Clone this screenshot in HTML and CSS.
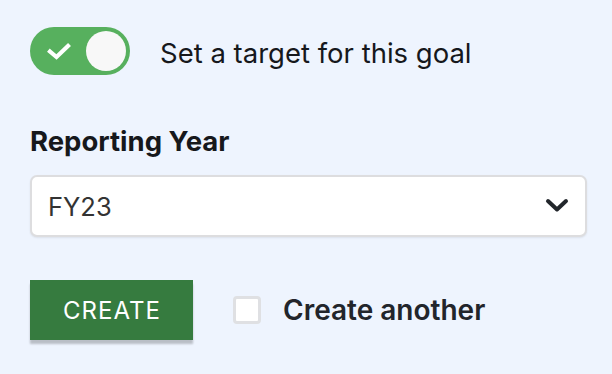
FILE: index.html
```html
<!DOCTYPE html>
<html>
<head>
<meta charset="utf-8">
<link rel="stylesheet" href="styles.css">
</head>
<body>
<div class="form">
  <div class="toggle-row">
    <span class="toggle">
      <svg class="check" width="24" height="17" viewBox="0 0 24 17"><path d="M3 8.5 L9.5 14 L21 3" fill="none" stroke="#fff" stroke-width="4.2" stroke-linecap="square"/></svg>
      <span class="knob"></span>
    </span>
    <span class="toggle-label">Set a target for this goal</span>
  </div>
  <div class="field">
    <div class="field-label">Reporting Year</div>
    <div class="select">
      <span class="select-value">FY23</span>
      <svg class="chevron" width="24" height="16" viewBox="0 0 24 16"><path d="M3 3 L12 11.5 L21 3" fill="none" stroke="#22262b" stroke-width="4" stroke-linecap="round" stroke-linejoin="round"/></svg>
    </div>
  </div>
  <div class="actions">
    <button class="btn">CREATE</button>
    <label class="check-row"><span class="box"></span><span class="check-label">Create another</span></label>
  </div>
</div>
</body>
</html>
```
FILE: styles.css
```css
html, body { margin: 0; padding: 0; }
body {
  background: #eef4fe;
  font-family: Inter, "Liberation Sans", sans-serif;
  width: 612px;
  height: 374px;
  overflow: hidden;
}
.form { padding: 27px 24px 0 30px; }
.toggle-row { display: flex; align-items: center; gap: 30px; }
.toggle {
  width: 100px; height: 48px; border-radius: 24px;
  background: #57b05e;
  display: flex; align-items: center; justify-content: space-between;
  padding: 0 4px 0 17px; box-sizing: border-box;
}
.check { display: block; }
.knob { width: 40px; height: 40px; border-radius: 50%; background: #f8f8f8; }
.toggle-label { font-size: 27.5px; line-height: 34px; color: #16181c; padding-top: 4px; }
.field { margin-top: 49px; }
.field-label { font-size: 27.5px; font-weight: 700; color: #16181c; line-height: 34px; }
.select {
  margin-top: 17px; width: 557px; height: 62px; box-sizing: border-box;
  background: #fff; border: 2px solid #dddddf; border-radius: 7px;
  display: flex; align-items: center; justify-content: space-between;
  padding: 0 16px 0 16px;
  box-shadow: 0 1px 2px rgba(0,0,0,0.08);
}
.select-value { font-size: 25.5px; color: #333; }
.chevron { display: block; }
.actions { margin-top: 43px; display: flex; align-items: center; gap: 40px; }
.btn {
  width: 163px; height: 60px; border: 0; border-radius: 0;
  background: #367b3f; color: #fff;
  font-family: inherit; font-size: 24px; letter-spacing: 1px;
  box-shadow: 0 4px 2px rgba(0,0,0,0.22);
  padding: 0 0 0 1px;
}
.check-row { display: flex; align-items: center; gap: 22px; }
.box {
  width: 28px; height: 28px; box-sizing: border-box;
  border: 3px solid #dfe0e3; border-radius: 4px; background: #fff;
}
.check-label { font-size: 28px; font-weight: 600; color: #22252b; }
```
